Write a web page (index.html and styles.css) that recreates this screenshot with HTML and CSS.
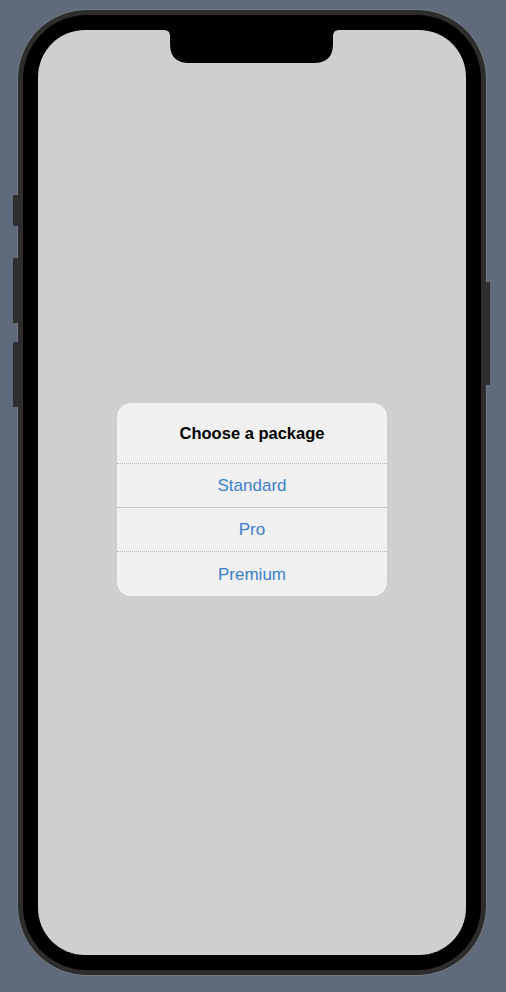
FILE: index.html
```html
<!DOCTYPE html>
<html lang="en">
<head>
<meta charset="utf-8">
<title>Choose a package</title>
<link rel="stylesheet" href="styles.css">
</head>
<body>
<div class="device">
  <span class="btn btn-mute"></span>
  <span class="btn btn-vol-up"></span>
  <span class="btn btn-vol-down"></span>
  <span class="btn btn-power"></span>
  <div class="bezel">
    <div class="screen">
      <svg class="notch" width="175" height="34" viewBox="0 0 175 34" aria-hidden="true">
        <path d="M0 0 H175 Q169 0 169 6 V14 Q169 33 150 33 H25 Q6 33 6 14 V6 Q6 0 0 0 Z" fill="#000"/>
      </svg>
      <div class="alert">
        <div class="alert-title">Choose a package</div>
        <div class="alert-action sep-dotted">Standard</div>
        <div class="alert-action sep-solid">Pro</div>
        <div class="alert-action sep-dotted">Premium</div>
      </div>
    </div>
  </div>
</div>
</body>
</html>
```
FILE: styles.css
```css
html, body {
  margin: 0;
  padding: 0;
}
body {
  background: #5f6b7a;
  width: 506px;
  height: 992px;
  overflow: hidden;
  font-family: "Liberation Sans", Arial, sans-serif;
}
.device {
  position: relative;
  margin: 9px 0 0 17px;
  width: 470px;
  height: 967px;
  box-sizing: border-box;
  border-radius: 70px;
  background: #2d2d2d;
  border: 1px solid #787c82;
  padding: 5px;
}
.bezel {
  height: 100%;
  box-sizing: border-box;
  background: #000;
  border-radius: 64px;
  padding: 15px;
}
.screen {
  position: relative;
  height: 100%;
  box-sizing: border-box;
  background: #cfcfcf;
  border-radius: 47px;
  display: flex;
  align-items: center;
  justify-content: center;
  padding-top: 13px;
  overflow: hidden;
}
.notch {
  position: absolute;
  top: 0;
  left: 126px;
  display: block;
}
.btn {
  position: absolute;
  background: #2e2e2e;
  border-radius: 1px;
}
.btn-mute { left: -5px; top: 185px; width: 5px; height: 31px; }
.btn-vol-up { left: -5px; top: 248px; width: 5px; height: 65px; }
.btn-vol-down { left: -5px; top: 332px; width: 5px; height: 65px; }
.btn-power { left: 468px; top: 272px; width: 4px; height: 103px; }

.alert {
  width: 270px;
  background: #f0f0f0;
  border-radius: 14px;
  overflow: hidden;
}
.alert-title {
  height: 60px;
  box-sizing: border-box;
  padding-top: 2px;
  display: flex;
  align-items: center;
  justify-content: center;
  font-weight: bold;
  font-size: 16.5px;
  color: #000;
}
.alert-action {
  height: 44px;
  box-sizing: border-box;
  padding-top: 2px;
  display: flex;
  align-items: center;
  justify-content: center;
  font-size: 17px;
  color: #3d7fce;
}
.alert-action:last-child {
  height: 45px;
}
.sep-dotted { border-top: 1px dotted #b8b8b8; }
.sep-solid { border-top: 1px solid #c6c6c6; }
```
